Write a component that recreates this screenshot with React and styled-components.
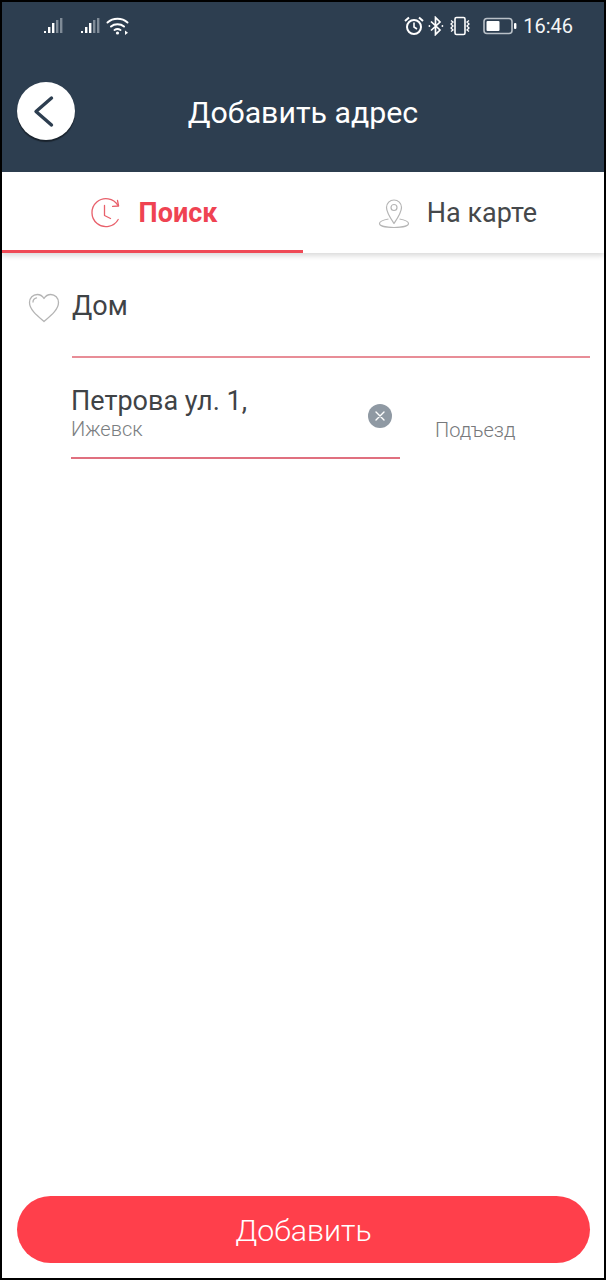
import React from 'react'
import styled, { createGlobalStyle } from 'styled-components'

const Global = createGlobalStyle`
  html, body { margin: 0; padding: 0; background: #000; }
  * { box-sizing: border-box; }
`

const Signal = ({ dim }) => (
  <svg width="20" height="18" viewBox="0 0 20 18">
    <rect x="0" y="14" width="2" height="2" fill="#fff" />
    <rect x="4" y="10" width="2.4" height="6" fill="#fff" />
    <rect x="8" y="6" width="2.4" height="10" fill="#fff" />
    <rect x="12" y="3" width="2.4" height="13" fill={dim} />
    <rect x="16" y="1" width="2.4" height="15" fill={dim} />
  </svg>
)

const Wifi = () => (
  <svg width="24" height="20" viewBox="0 0 24 20" fill="none" stroke="#fff" strokeWidth="2" strokeLinecap="round">
    <path d="M1.5 6.5C7 1.5 16 1.5 21.5 6.5" />
    <path d="M5 10.5C8.5 7.5 14.5 7.5 18 10.5" />
    <path d="M8.5 14C10.5 12.6 12.5 12.6 14.5 14" />
    <circle cx="11.5" cy="17" r="1.6" fill="#fff" stroke="none" />
    <path d="M19 14.5l3 2.2-3 2.2z" fill="#fff" stroke="none" />
  </svg>
)

const Alarm = () => (
  <svg width="20" height="20" viewBox="0 0 20 20" fill="none" stroke="#fff" strokeWidth="2">
    <circle cx="10" cy="11" r="7" />
    <path d="M10 6.5V11l3 2" strokeWidth="1.6" />
    <path d="M1 5l4-3.6M19 5l-4-3.6" />
  </svg>
)

const Bluetooth = () => (
  <svg width="16" height="20" viewBox="0 0 16 20" fill="none" stroke="#fff" strokeWidth="1.7">
    <path d="M3 5.5l9 8.5-4.5 4.5V1.5L12 6l-9 8.5" />
    <circle cx="1.4" cy="10" r=".9" fill="#fff" stroke="none" />
    <circle cx="14.4" cy="10" r=".9" fill="#fff" stroke="none" />
  </svg>
)

const Vibrate = () => (
  <svg width="24" height="20" viewBox="0 0 24 20" fill="none" stroke="#fff" strokeWidth="1.6">
    <rect x="7" y="1.5" width="10" height="17" rx="1.5" />
    <path d="M3 4.5l2 1.5-2 2 2 2-2 2 2 2-2 1.5M21 4.5l-2 1.5 2 2-2 2 2 2-2 2 2 1.5" strokeWidth="1.3" />
  </svg>
)

const Battery = () => (
  <svg width="34" height="18" viewBox="0 0 34 18">
    <rect x="1" y="1.5" width="28" height="15" rx="3" fill="none" stroke="#b9c0c7" strokeWidth="1.6" />
    <rect x="3.5" y="4" width="13" height="10" rx="1" fill="#fff" />
    <rect x="31" y="6" width="2.4" height="6" rx="1" fill="#fff" />
  </svg>
)

const Chevron = () => (
  <svg width="24" height="34" viewBox="0 0 24 34" fill="none" stroke="#2d3e50" strokeWidth="3.4" strokeLinecap="round" strokeLinejoin="round">
    <path d="M19.500 4L4 17.500 19.500 31" />
  </svg>
)

const Clock = () => (
  <svg width="32" height="32" viewBox="0 0 32 32" fill="none" stroke="#e8606b" strokeWidth="1.3" strokeLinecap="round" strokeLinejoin="round">
    <path d="M28 8.5A14 14 0 1 0 28.2 22.5" />
    <path d="M27.5 3.5L28.6 9l-6 .4" />
    <path d="M14.5 8.500v10l6 3" />
  </svg>
)

const Pin = () => (
  <svg width="32" height="32" viewBox="0 0 32 32" fill="none" stroke="#b5b5b5" strokeWidth="1.2" strokeLinejoin="round">
    <path d="M16 26.5C12 20.5 8.5 15.5 8.5 10.5a7.5 7.5 0 0 1 15 0C23.500 15.500 20 20.500 16 26.500z" />
    <circle cx="16" cy="10.500" r="3" />
    <path d="M10.500 22C5 23 1.500 24.500 1.500 26.500 1.500 29 8 30.500 16 30.500S30.500 29 30.500 26.500C30.500 24.500 27 23 21.500 22" />
  </svg>
)

const Heart = () => (
  <svg width="32" height="30" viewBox="0 0 32 30" fill="none" stroke="#b4b4b4" strokeWidth="1.3" strokeLinejoin="round" strokeLinecap="round">
    <path d="M16 28.500C9 22.500 1.500 16.500 1.500 9.500 1.500 5 5 1.500 9.200 1.500c2.800 0 5.300 1.500 6.800 4 1.500-2.500 4-4 6.800-4 4.200 0 7.700 3.500 7.700 8 0 7-7.500 13-14.500 19z" />
    <path d="M5 9c0-2 1.400-3.700 3.500-4.200" />
  </svg>
)

const App = () => (
  <Frame>
    <Global />
    <Header>
      <StatusBar>
        <StatusLeft>
          <Signal dim="#7f8b97" />
          <Signal dim="#7f8b97" />
          <Wifi />
        </StatusLeft>
        <StatusRight>
          <Alarm />
          <Bluetooth />
          <Vibrate />
          <Battery />
          <Time>16:46</Time>
        </StatusRight>
      </StatusBar>
      <NavRow>
        <BackButton><Chevron /></BackButton>
        <Title>Добавить адрес</Title>
      </NavRow>
    </Header>
    <Tabs>
      <Tab $active>
        <Clock />
        <TabLabel $active>Поиск</TabLabel>
      </Tab>
      <Tab>
        <Pin />
        <TabLabel>На карте</TabLabel>
      </Tab>
    </Tabs>
    <Content>
      <NameRow>
        <HeartSlot><Heart /></HeartSlot>
        <NameField>Дом</NameField>
      </NameRow>
      <AddressRow>
        <AddressField>
          <AddressText>
            <Street>Петрова ул. 1,</Street>
            <City>Ижевск</City>
          </AddressText>
          <ClearButton>
            <svg width="10" height="10" viewBox="0 0 10 10" stroke="#fff" strokeWidth="1.4" strokeLinecap="round">
              <path d="M1 1l8 8M9 1l-8 8" />
            </svg>
          </ClearButton>
        </AddressField>
        <Entrance>Подъезд</Entrance>
      </AddressRow>
    </Content>
    <Footer>
      <AddButton>Добавить</AddButton>
    </Footer>
  </Frame>
)

const Frame = styled.div`
  width: 606px;
  height: 1280px;
  border: 2px solid #000;
  background: #fff;
  display: flex;
  flex-direction: column;
  font-family: Roboto, 'Liberation Sans', sans-serif;
  overflow: hidden;
`

const Header = styled.header`
  height: 170px;
  flex: none;
  background: #2d3e50;
  color: #fff;
`

const StatusBar = styled.div`
  height: 48px;
  display: flex;
  align-items: center;
  justify-content: space-between;
  padding: 0 31px 0 42px;
`

const StatusLeft = styled.div`
  display: flex;
  align-items: center;
  gap: 17px;

  svg:last-child {
    margin-left: -12px;
  }
`

const StatusRight = styled.div`
  display: flex;
  align-items: center;
  gap: 4px;

  svg:nth-child(4) {
    margin-left: 7px;
  }
`

const Time = styled.span`
  font-size: 20px;
  margin-left: 2px;
  color: #f4f5f6;
`

const NavRow = styled.div`
  position: relative;
  display: flex;
  justify-content: center;
  align-items: center;
  height: 58px;
  margin-top: 32px;
`

const BackButton = styled.button`
  position: absolute;
  left: 15px;
  top: 0;
  width: 58px;
  height: 58px;
  border: 0;
  border-radius: 50%;
  background: #fff;
  box-shadow: 0 2px 1px rgba(0, 0, 0, 0.45);
  display: flex;
  align-items: center;
  justify-content: center;
  padding: 0 4px 0 0;
`

const Title = styled.h1`
  margin: 0;
  padding-top: 3px;
  font-size: 30.3px;
  font-weight: 400;
  color: #fff;
`

const Tabs = styled.nav`
  display: grid;
  grid-template-columns: 301px 1fr;
  height: 81px;
  flex: none;
  box-shadow: 0 3px 5px rgba(0, 0, 0, 0.14);
`

const Tab = styled.div`
  display: flex;
  align-items: center;
  justify-content: center;
  gap: 17px;
  border-bottom: 3px solid ${p => (p.$active ? '#ef4a56' : 'transparent')};
  padding: ${p => (p.$active ? '4px 0 0 2px' : '4px 0 0 8px')};
`

const TabLabel = styled.span`
  font-size: 27px;
  font-weight: ${p => (p.$active ? 700 : 400)};
  color: ${p => (p.$active ? '#ef4352' : '#45484b')};
`

const Content = styled.main`
  flex: 1;
  display: flex;
  flex-direction: column;
  padding-top: 23px;
`

const NameRow = styled.div`
  display: flex;
  align-items: flex-start;
`

const HeartSlot = styled.div`
  width: 70px;
  padding: 17px 0 0 26px;
  line-height: 0;
`

const NameField = styled.div`
  flex: 0 0 518px;
  height: 82px;
  padding-top: 14px;
  font-size: 27px;
  line-height: 32px;
  color: #3f4346;
  border-bottom: 2px solid #e88d97;
`

const AddressRow = styled.div`
  display: flex;
  align-items: flex-start;
  padding: 19px 0 0 69px;
`

const AddressField = styled.div`
  position: relative;
  width: 329px;
  height: 82px;
  border-bottom: 2px solid #e0707f;
`

const AddressText = styled.div`
  display: flex;
  flex-direction: column;
`

const Street = styled.span`
  font-size: 27px;
  line-height: 30px;
  margin-top: 9px;
  color: #3f4346;
`

const City = styled.span`
  font-size: 20px;
  line-height: 24px;
  margin-top: 1px;
  font-weight: 300;
  color: #7b7e81;
`

const ClearButton = styled.span`
  position: absolute;
  right: 8px;
  top: 27px;
  width: 24px;
  height: 24px;
  border-radius: 50%;
  background: #8f99a3;
  display: flex;
  align-items: center;
  justify-content: center;
`

const Entrance = styled.span`
  margin: 41px 0 0 35px;
  font-size: 20px;
  line-height: 24px;
  font-weight: 300;
  color: #77797c;
`

const Footer = styled.footer`
  padding: 0 14px 15px 15px;
`

const AddButton = styled.button`
  width: 100%;
  height: 67px;
  border: 0;
  border-radius: 34px;
  padding-top: 3px;
  background: #ff3f4b;
  color: #fff;
  font-family: Roboto, 'Liberation Sans', sans-serif;
  font-size: 30.3px;
  font-weight: 300;
`

export default App
